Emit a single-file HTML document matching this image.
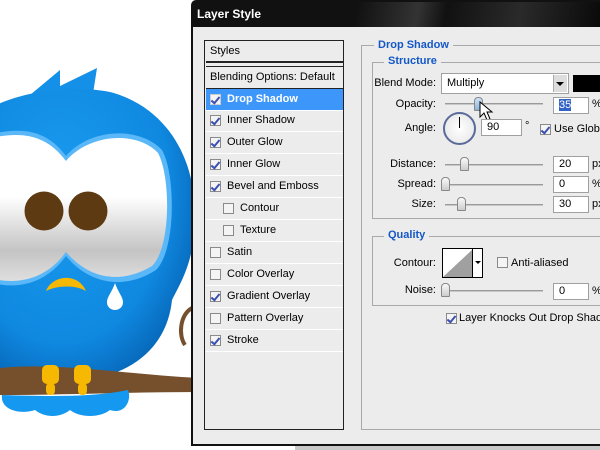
<!DOCTYPE html>
<html><head><style>
*{margin:0;padding:0;box-sizing:border-box}
body{width:600px;height:450px;overflow:hidden;background:#fff;position:relative;font-family:"Liberation Sans",sans-serif;font-size:11px;color:#000;white-space:nowrap}
.a{position:absolute}
.row{position:absolute;left:206px;width:137px;height:22px;border-bottom:1px solid #fff;line-height:21px;padding-left:21px}
.cb{position:absolute;width:11px;height:11px;border:1px solid #8a8a8a;background:#f4f4f4}
.cb.on::after{content:"";position:absolute;left:2px;top:0px;width:3px;height:7px;border:solid #3b4fb0;border-width:0 2px 2px 0;transform:rotate(40deg)}
.row .cb{left:4px;top:5px}
.lbl{position:absolute;text-align:right}
.inp{position:absolute;background:#fff;border:1px solid #a0a0a0;height:17px;line-height:15px;padding-left:5px}
.track{position:absolute;height:2px;background:#c8c8c8;border-top:1px solid #9a9a9a}
.thumb{position:absolute;width:9px;height:14px;border:1px solid #888;border-radius:4px 4px 1px 1px;background:linear-gradient(#fafafa,#ccc)}
.grp{position:absolute;border:1px solid #a9a9a9}
.gt{position:absolute;background:#ececec;color:#1458c8;font-weight:bold;padding:0 4px}
</style></head><body>
<svg class="a" style="left:0;top:0" width="200" height="450">
<defs>
<radialGradient id="bg" cx="0.35" cy="0.35" r="0.75"><stop offset="0" stop-color="#1a9cf0"/><stop offset=".7" stop-color="#0f88e0"/><stop offset="1" stop-color="#0560b0"/></radialGradient>
<linearGradient id="eg" gradientUnits="userSpaceOnUse" x1="0" y1="140" x2="0" y2="282"><stop offset=".4" stop-color="#ffffff"/><stop offset=".78" stop-color="#c4c4c4"/><stop offset="1" stop-color="#e0e0e0"/></linearGradient>
</defs>
<path d="M30 95 L60 70 L60 86 L97 68 L92 100 Z" fill="#1590e8"/>
<path d="M-10 108 C20 92 70 84 110 92 C160 105 195 150 195 215 C195 260 182 280 172 300 C168 340 140 375 80 380 C30 382 -10 370 -10 360 Z" fill="url(#bg)"/>
<path d="M-10 134 C20 128 45 128 66 156 C90 128 140 126 162 150 C176 175 176 250 156 270 C125 290 90 285 66 256 C45 285 15 290 -10 282 Z" fill="#5ab8f8"/>
<path d="M-10 138 C20 132 45 133 66 161 C90 133 138 131 158 153 C171 177 171 248 152 266 C122 284 90 280 66 252 C45 281 15 285 -10 278 Z" fill="url(#eg)"/>
<circle cx="44" cy="211" r="19.5" fill="#5e3a12"/>
<circle cx="88" cy="211" r="19.5" fill="#5e3a12"/>
<path d="M46 291 C52 275 78 272 86 291 C76 285 58 285 46 291 Z" fill="#f6b800"/>
<path d="M115 283 C112 292 107 297 107 302 C107 308 112 310 115 310 C118 310 123 308 123 302 C123 297 118 292 115 283 Z" fill="#fff"/>
<path d="M185 345 C178 335 180 315 192 308" stroke="#76502c" stroke-width="4" fill="none"/>
<path d="M0 368 C60 362 130 375 200 378 L200 392 C130 392 60 395 0 395 Z" fill="#76502c"/>
<path d="M2 395 C0 410 20 415 35 410 C45 418 60 418 70 410 C80 418 100 418 110 410 C125 415 132 400 128 390 C90 398 40 396 2 395 Z" fill="#1598f0"/>
<rect x="42" y="365" width="17" height="19" rx="5" fill="#f6b800"/><rect x="46" y="383" width="9" height="12" rx="4" fill="#f6b800"/>
<rect x="74" y="365" width="17" height="19" rx="5" fill="#f6b800"/><rect x="78" y="383" width="9" height="12" rx="4" fill="#f6b800"/>
</svg>
<div class="a" style="left:295px;top:444px;width:305px;height:6px;background:#c8c8c8"></div>
<div class="a" style="left:191px;top:0;width:409px;height:446px;background:#ececec;border:2px solid #111;border-right:none;border-radius:5px 0 0 0"></div>
<div class="a" style="left:193px;top:2px;width:407px;height:25px;background:linear-gradient(100deg,#111 40%,#333 55%,#111 62%,#2a2a2a 80%,#0a0a0a);color:#fff;font-weight:bold;font-size:12px;line-height:25px;padding-left:4px">Layer Style</div>
<div class="a" style="left:204px;top:40px;width:140px;height:390px;border:1px solid #222;background:#ececec"></div>
<div class="row" style="top:41px;height:22px;padding-left:4px;border-bottom:2px solid #222">Styles</div>
<div class="row" style="top:66px;padding-left:4px;border-top:1px solid #222;border-bottom:1px solid #222;height:23px">Blending Options: Default</div>
<div class="row" style="top:89px;background:#3d97fa;color:#fff;font-weight:bold"><span class="cb on" style="border-color:#ccc"></span>Drop Shadow</div>
<div class="row" style="top:110px"><span class="cb on"></span>Inner Shadow</div>
<div class="row" style="top:132px"><span class="cb on"></span>Outer Glow</div>
<div class="row" style="top:154px"><span class="cb on"></span>Inner Glow</div>
<div class="row" style="top:176px"><span class="cb on"></span>Bevel and Emboss</div>
<div class="row" style="top:198px;padding-left:34px"><span class="cb" style="left:17px"></span>Contour</div>
<div class="row" style="top:220px;padding-left:34px"><span class="cb" style="left:17px"></span>Texture</div>
<div class="row" style="top:242px"><span class="cb"></span>Satin</div>
<div class="row" style="top:264px"><span class="cb"></span>Color Overlay</div>
<div class="row" style="top:286px"><span class="cb on"></span>Gradient Overlay</div>
<div class="row" style="top:308px"><span class="cb"></span>Pattern Overlay</div>
<div class="row" style="top:330px"><span class="cb on"></span>Stroke</div>

<div class="grp" style="left:361px;top:45px;width:250px;height:385px"></div>
<div class="gt" style="left:374px;top:39px">Drop Shadow</div>
<div class="grp" style="left:372px;top:62px;width:240px;height:157px"></div>
<div class="gt" style="left:384px;top:55px">Structure</div>
<div class="lbl" style="left:368px;top:77px;width:68px">Blend Mode:</div>
<div class="inp" style="left:441px;top:73px;width:128px;height:21px;line-height:19px">Multiply</div>
<div class="a" style="left:553px;top:75px;width:14px;height:17px;background:#ddd;border-left:1px solid #aaa"></div>
<div class="a" style="left:556px;top:82px;border:4px solid transparent;border-top:4px solid #000"></div>
<div class="a" style="left:573px;top:75px;width:27px;height:17px;background:#000"></div>
<div class="lbl" style="left:368px;top:98px;width:68px">Opacity:</div>
<div class="track" style="left:445px;top:103px;width:98px"></div>
<div class="thumb" style="left:474px;top:97px;background:linear-gradient(#cfe4f8,#8cb4dc)"></div>
<div class="inp" style="left:553px;top:97px;width:36px"><span style="background:#3163c5;color:#fff">35</span></div>
<div class="a" style="left:592px;top:98px">%</div>
<svg class="a" style="left:478px;top:100px" width="18" height="24"><path d="M2 2 L2 17 L6 13 L9 20 L12 19 L9 12 L14 12 Z" fill="#fff" stroke="#000"/></svg>
<div class="lbl" style="left:368px;top:122px;width:68px">Angle:</div>
<div class="a" style="left:443px;top:112px;width:33px;height:33px;border-radius:50%;border:2px solid #5a6a9a;background:radial-gradient(#fff,#e4e4e4)"></div>
<div class="a" style="left:459px;top:117px;width:1px;height:11px;background:#000"></div>
<div class="inp" style="left:481px;top:119px;width:41px">90</div>
<div class="a" style="left:525px;top:120px">°</div>
<span class="cb on" style="left:540px;top:124px"></span>
<div class="a" style="left:554px;top:123px">Use Global</div>
<div class="lbl" style="left:368px;top:158px;width:68px">Distance:</div>
<div class="track" style="left:445px;top:164px;width:98px"></div>
<div class="thumb" style="left:460px;top:157px"></div>
<div class="inp" style="left:553px;top:156px;width:36px">20</div><div class="a" style="left:592px;top:158px">px</div>
<div class="lbl" style="left:368px;top:178px;width:68px">Spread:</div>
<div class="track" style="left:445px;top:184px;width:98px"></div>
<div class="thumb" style="left:441px;top:177px"></div>
<div class="inp" style="left:553px;top:176px;width:36px">0</div><div class="a" style="left:592px;top:178px">%</div>
<div class="lbl" style="left:368px;top:198px;width:68px">Size:</div>
<div class="track" style="left:445px;top:204px;width:98px"></div>
<div class="thumb" style="left:457px;top:197px"></div>
<div class="inp" style="left:553px;top:196px;width:36px">30</div><div class="a" style="left:592px;top:198px">px</div>

<div class="grp" style="left:372px;top:236px;width:240px;height:70px"></div>
<div class="gt" style="left:384px;top:229px">Quality</div>
<div class="lbl" style="left:368px;top:257px;width:68px">Contour:</div>
<div class="a" style="left:442px;top:248px;width:41px;height:30px;border:1px solid #000;background:#fff"></div>
<svg class="a" style="left:443px;top:249px" width="30" height="28"><path d="M0 28 L30 0 L30 28 Z" fill="#a0a0a0"/></svg>
<div class="a" style="left:472px;top:249px;width:1px;height:28px;background:#000"></div>
<div class="a" style="left:475px;top:261px;border:3px solid transparent;border-top:3px solid #000"></div>
<span class="cb" style="left:497px;top:257px"></span>
<div class="a" style="left:511px;top:257px">Anti-aliased</div>
<div class="lbl" style="left:368px;top:284px;width:68px">Noise:</div>
<div class="track" style="left:445px;top:290px;width:98px"></div>
<div class="thumb" style="left:441px;top:283px"></div>
<div class="inp" style="left:553px;top:283px;width:36px">0</div><div class="a" style="left:592px;top:285px">%</div>
<span class="cb on" style="left:446px;top:313px"></span>
<div class="a" style="left:459px;top:312px">Layer Knocks Out Drop Shadow</div>
</body></html>
